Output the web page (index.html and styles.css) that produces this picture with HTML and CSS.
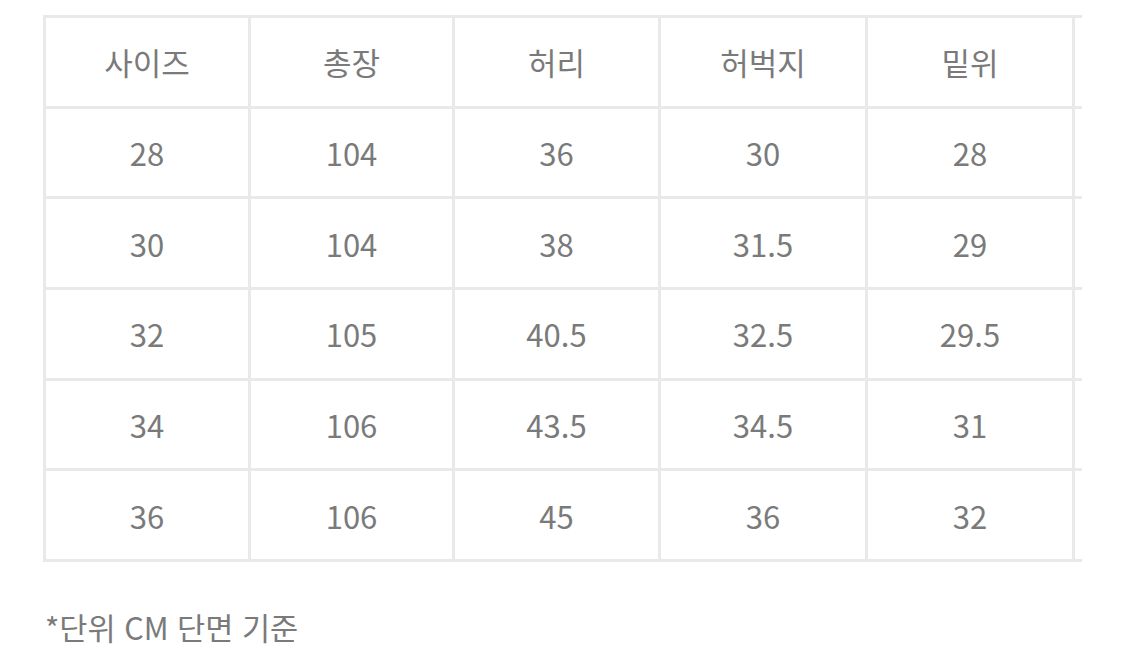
FILE: index.html
```html
<!DOCTYPE html>
<html lang="ko">
<head>
<meta charset="utf-8">
<link rel="stylesheet" href="styles.css">
</head>
<body>
<div class="page">
  <div class="table-wrap">
    <table class="size-table">
      <colgroup>
        <col class="c1"><col class="c2"><col class="c3"><col class="c4"><col class="c5"><col class="c6">
      </colgroup>
      <thead>
        <tr><th>사이즈</th><th>총장</th><th>허리</th><th>허벅지</th><th>밑위</th><th></th></tr>
      </thead>
      <tbody>
        <tr><td>28</td><td>104</td><td>36</td><td>30</td><td>28</td><td></td></tr>
        <tr><td>30</td><td>104</td><td>38</td><td>31.5</td><td>29</td><td></td></tr>
        <tr><td>32</td><td>105</td><td>40.5</td><td>32.5</td><td>29.5</td><td></td></tr>
        <tr><td>34</td><td>106</td><td>43.5</td><td>34.5</td><td>31</td><td></td></tr>
        <tr><td>36</td><td>106</td><td>45</td><td>36</td><td>32</td><td></td></tr>
      </tbody>
    </table>
  </div>
  <p class="note">*단위 CM 단면 기준</p>
</div>
</body>
</html>
```

FILE: styles.css
```css
html, body {
  margin: 0;
  padding: 0;
  background: #ffffff;
}
body {
  font-family: "Noto Sans CJK KR", "Noto Sans", sans-serif;
  color: #7a7a7a;
}
.page {
  padding: 15px 0 0 43px;
}
.table-wrap {
  width: 1039px;
  overflow: hidden;
}
.size-table {
  border-collapse: collapse;
  table-layout: fixed;
  width: 1235px;
}
.size-table .c1 { width: 205px; }
.size-table .c2 { width: 204px; }
.size-table .c3 { width: 206px; }
.size-table .c4 { width: 207px; }
.size-table .c5 { width: 207px; }
.size-table .c6 { width: 206px; }
.size-table tr {
  height: 90.7px;
}
.size-table th,
.size-table td {
  border: 3px solid #e9e9e9;
  padding: 0;
  text-align: center;
  vertical-align: middle;
  font-size: 31px;
  font-weight: 400;
  line-height: 1.2;
  color: #7a7a7a;
}
.note {
  margin: 44px 0 0 2px;
  font-size: 30.6px;
  line-height: 1.4;
  color: #7a7a7a;
}
```
